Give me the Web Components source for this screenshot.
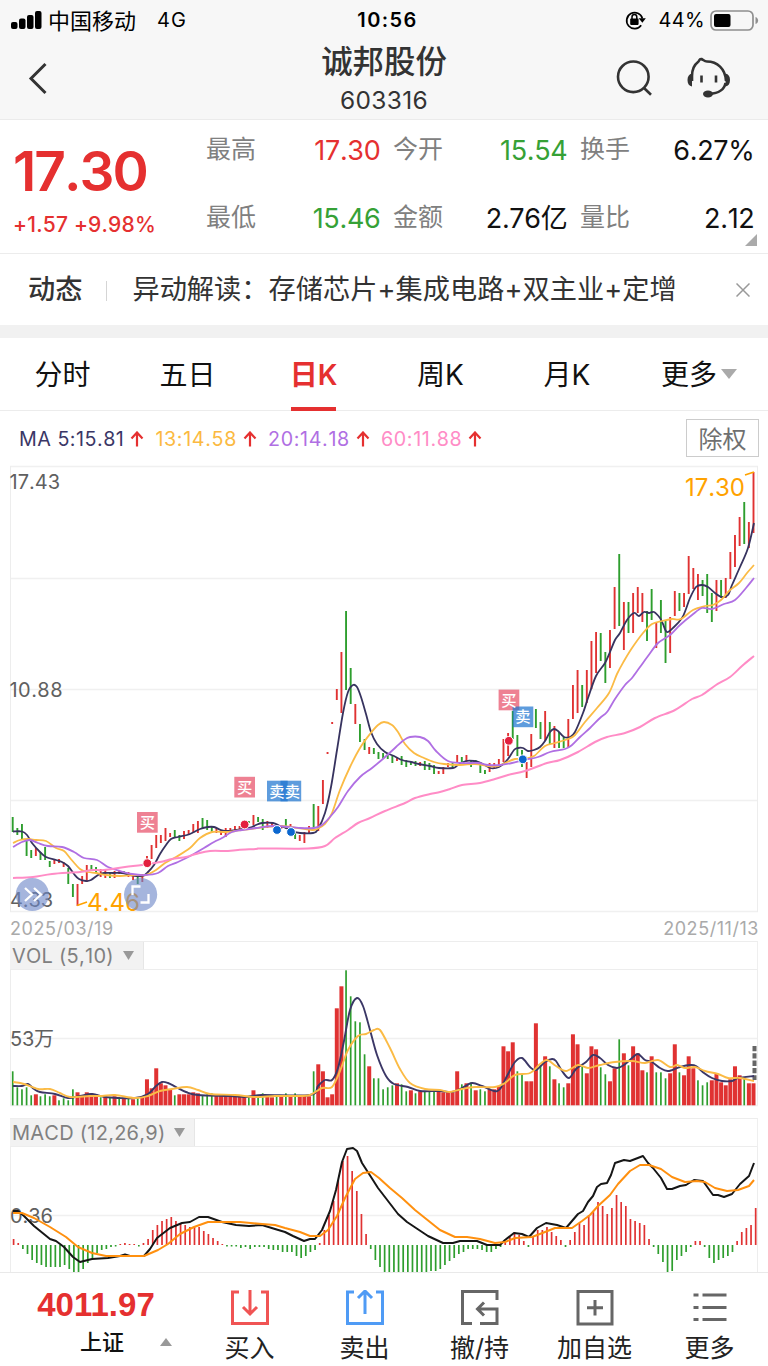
<!DOCTYPE html>
<html lang="zh-CN">
<head>
<meta charset="utf-8">
<title>诚邦股份 603316</title>
<style>
  html, body {
    margin: 0;
    padding: 0;
  }
  body {
    width: 768px;
    height: 1366px;
    overflow: hidden;
    background: #fff;
    color: #111;
    font-family: Inter, "Noto Sans CJK SC", sans-serif;
    font-kerning: none;
    --red: #e53030;
    --green: #36a136;
    --line: #ececec;
  }
</style>
</head>
<body>
<stock-page></stock-page>

<script>
const STEP = 4.63;
const FIRST_X = 12.7;
const RED = "#e03232";
const GREEN = "#2e9e2e";

// one entry per trading day: colour, top, bottom
const CANDLES = `g817-832 g828-835 g824-840 g840-856 g850-858 r848-856 g852-860 g847-860 g861-867 r859-864
r859-863 r862-867 g868-884 g884-897 r884-906 r876-884 r865-882 g865-871 g867-873 r869-877
r870-878 g872-878 r871-878 r870-874 g871-874 r872-877 r875-880 g877-884 r874-882 r856-862
r845-859 r835-848 r835-843 r828-841 r833-837 g830-837 g835-841 r831-839 r830-835 r824-833
r821-833 g818-828 g820-830 g826-833 r828-833 r830-835 r828-837 r828-833 r826-830 r826-830
r824-830 g821-823 r815-825 g817-822 g819-830 r821-828 r823-827 g825-830 r825-829 g819-829
r824-829 g832-839 r835-841 r832-843 r826-833 g804-828 r806-831 r780-804 r752-754 r722-724
r689-700 r652-713 g611-690 g668-704 r704-724 g724-742 g739-750 r747-754 g748-754 g752-759
g753-759 g753-759 g756-763 r757-761 g756-765 g760-767 g762-765 g761-766 r762-766 g761-770
g763-770 g765-774 r771-774 r767-774 r763-767 g763-767 r755-763 g757-762 r755-762 g760-767
g760-765 g765-773 g770-774 r763-772 r763-768 r759-766 r739-762 r733-756 g711-739 g735-756
g750-767 r762-778 r734-767 g709-728 g722-739 r711-741 g722-744 r726-748 g732-748 g737-748
r719-747 r685-719 r670-713 g685-707 r670-703 r641-689 r632-673 g633-661 g652-683 r630-668
r587-629 g554-626 r602-650 g602-633 r593-633 r587-613 r593-622 g611-641 g589-620 r622-648
g600-633 g621-663 r617-653 r591-616 g593-611 r593-607 r556-594 r568-589 r574-600 g580-596
g574-613 g593-622 r580-611 g580-598 r578-598 r552-579 r535-567 r517-546 g502-544 r522-548
r472-533`.split(/\s+/);

const VOLUMES = `g34 g18 g16 g18 g10 r11 g9 g11 g9 r10 g5 g7 g5 g16 r13 r9 r13 r12 r11 g8
r9 g8 r9 g8 r7 g7 r6 g7 r9 r26 r17 r37 r22 r20 r16 g10 r11 r11 r11 r13
r12 g10 g11 g12 r10 r10 r10 r10 r10 r9 r9 g8 r15 g10 g12 r9 r8 g10 r9 g12
r10 g12 r10 r10 r9 g34 r41 r34 r8 r11 r97 r119 g135 g109 g84 g83 g51 r39 g27 g27
g16 g18 g20 r22 g21 g14 r15 g12 r14 g14 g14 g14 r14 r13 r13 r13 r34 g21 r22 g23
r15 g16 g14 r16 r16 r19 r59 r54 r63 g34 g31 r24 r24 r82 g40 r49 g39 r26 g22 g18
r22 r71 r61 g39 r32 r59 r56 g38 g31 r24 r37 g66 r52 g40 r59 r52 r35 g33 r49 g33
g33 g27 r32 r61 g33 r30 r49 r37 g25 g20 g23 r25 r32 r23 r20 r26 r39 r30 g27 r22
r22`.split(/\s+/);

const MACD_BARS = [
  6, 2, -4, -9, -15, -18, -20, -22, -22, -22, -22, -20, -24, -27, -27, -24, -18, -13, -8, -5,
  -4, -2, -1.5, 1, 2, 1, 1, -1.5, 2, 6, 15, 20, 24, 26, 28, 24, 22, 20, 18, 18,
  18, 14, 11, 7, 4, 1, -1.5, -1.5, -1.5, -3, -2, -4, -2, -2, -2, -4, -5, -5, -7, -7,
  -7, -11, -13, -11, -7, -5, 2, 15, 30, 44, 65, 84, 89, 74, 54, 31, 11, -4, -15, -22,
  -27, -27, -27, -27, -27, -27, -27, -27, -27, -27, -26, -26, -24, -20, -16, -13, -9, -7, -4, -4,
  -4, -5, -7, -7, -4, -2, 3, 8, 13, 10, 4, -2, 9, 15, 15, 18, 13, 9, 5, -2,
  5, 13, 22, 20, 30, 33, 43, 39, 31, 37, 50, 43, 39, 26, 24, 22, 20, 6, -2, -9,
  -17, -27, -26, -15, -11, -7, -2, 4, 4, -2, -13, -18, -15, -13, -11, -7, 4, 13, 17, 20,
  37
];

const MA5 = "13,831.5 22,831.5 27,835 32,843 40,852 46,857 56,860 62,862 68,866 74,874 79,879 86,881 91,880 98,875 104,873 113,873 122,873 130,875 137,876 143,876 148,872 154,865 160,854 166,845 171,839 178,837 187,835 194,832 200,829 208,827 214,827 221,830 227,831 236,830 244,829 252,827 256,825 262,823 273,823 280,826 286,828 292,831 300,833 313,833 318,829 325,813 331,787 337,750 343,713 348,692 353,685 357,687 361,697 366,714 371,732 377,744 385,752 394,756 402,760 411,762 419,764 430,766 439,768 453,768 458,765 466,761 474,761 481,763 490,768 496,768 502,765 508,759 514,750 518,748 523,748 528,751 534,750 540,747 545,741 550,732 554,729 558,731 564,737 570,737 575,732 583,713 588,698 596,676 605,663 610,652 615,640 620,633 627,620 634,613 639,616 644,612 649,613 654,612 660,618 663,624 667,632 674,627 682,618 686,609 690,598 696,587 702,585 708,587 715,593 722,597 728,595 732,585 740,567 748,548 754,523";
const MA13 = "13,843 20,840 28,839 36,840 46,841 56,848 64,851 70,858 80,869 88,872 96,873 106,875 120,876 135,875 146,875 156,870 165,863 176,857 190,848 200,838 212,832 225,832 235,831 250,829 265,827 282,826 298,828 312,830 317,829 325,824 332,813 340,790 350,767 360,748 370,734 378,725 384,722 392,725 398,732 405,744 414,753 424,758 434,762 444,764 460,765 475,764 488,766 498,766 505,763 515,759 524,759 534,756 545,746 555,743 568,739 575,735 585,722 597,708 609,693 617,674 624,661 632,648 643,633 652,624 662,621 672,619 681,619 693,610 705,606 713,605 721,600 729,591 739,583 747,573 754,565";
const MA20 = "13,847 22,842 30,840 38,843 48,846 62,847 74,852 84,858 97,860 108,867 120,871 132,874 145,875 158,873 168,866 178,862 192,855 204,848 214,842 222,838 232,832 242,830 256,828 275,826 300,828 314,828 322,825 330,817 338,807 348,791 360,777 372,768 384,758 396,747 404,740 410,737 420,737 428,741 436,751 448,761 462,763 478,763 488,765 500,765 512,763 524,760 538,757 550,752 565,749 572,745 580,737 590,728 600,718 607,712 615,699 625,685 632,678 640,667 648,656 658,643 670,635 680,625 692,615 702,608 712,609 724,604 735,600 746,588 754,578";
const MA60 = "13,878 33,877 52,874 80,872 92,870 104,870 125,867 142,865 160,862 172,859 186,857 196,854 210,851 228,851 238,850 256,849 262,848.5 308,848.5 325,846 335,838 348,830 358,823 370,818 385,811 405,803 415,798 430,794 440,792 450,789 462,785 480,783 495,779 508,775 525,771 547,763 560,760 578,752 595,742 607,737 625,733 640,727 655,718 675,710 692,699 702,695 716,685 730,677 742,666 754,656";

const VOL5 = "13,1086 22,1086 28,1084 34,1089 40,1092 55,1094 68,1098 80,1096 92,1094 105,1097 118,1098 135,1098 148,1094 156,1086 162,1082 168,1083 176,1087 186,1092 198,1095 230,1096 245,1097 262,1095 310,1095 318,1086 325,1080 332,1080 338,1068 344,1041 350,1010 357,998 363,1006 370,1030 377,1055 386,1076 394,1084 408,1087 420,1091 440,1091 452,1092 462,1088 472,1083 482,1086 494,1091 500,1089 507,1076 515,1062 522,1058 530,1067 536,1070 545,1062 552,1059 556,1061 562,1071 569,1078 576,1069 586,1062 593,1055 600,1058 608,1065 617,1068 624,1065 632,1058 638,1054 645,1060 652,1062 660,1068 668,1071 680,1067 690,1065 696,1066 704,1073 712,1078 722,1081 732,1081 738,1078 754,1076";
const VOL10 = "13,1082 24,1084 38,1089 50,1089 60,1093 70,1097 90,1096 102,1096 115,1095 135,1098 148,1096 160,1091 172,1089 187,1087 198,1090 210,1094 235,1095 255,1097 275,1096 295,1096 310,1095 322,1088 332,1087 340,1071 348,1050 358,1036 366,1034 374,1030 380,1030 390,1048 400,1069 410,1083 425,1089 440,1090 450,1092 462,1089 475,1087 495,1087 505,1083 515,1075 530,1073 540,1064 547,1060 556,1066 566,1071 578,1065 588,1068 600,1065 615,1062 632,1061 645,1063 658,1060 670,1067 677,1065 685,1068 695,1067 705,1071 718,1074 728,1078 740,1078 754,1081";

const DIF = "13,1211 18,1211 24,1216 34,1226 50,1239 56,1241 64,1247 73,1257 80,1262 92,1259 108,1258 120,1256 125,1254.5 130,1256 144,1256 150,1249 157,1238 170,1228 182,1223 190,1222 199,1217 208,1217 222,1222 236,1225 249,1226 262,1225 275,1229 285,1232 293,1236 304,1241 310,1239 315,1239 322,1230 330,1211 336,1190 342,1162 347,1149 353,1148 357,1151 362,1163 371,1177 378,1188 388,1201 398,1214 407,1222 416,1228 428,1236 443,1243 453,1243 460,1241 477,1241 487,1245 500,1245 505,1240 514,1233 522,1234 529,1237 537,1228 546,1223 557,1225 566,1228 572,1221 578,1214 583,1211 588,1202 593,1196 597,1187 601,1184 607,1183 611,1175 615,1163 624,1160 630,1161 643,1156 648,1163 653,1168 661,1178 667,1189 672,1189 680,1186 686,1185 694,1180 703,1181 708,1188 713,1195 718,1195 724,1197 732,1194 740,1184 749,1176 754,1163";
const DEA = "13,1213 22,1213 34,1218 50,1227 66,1237 78,1247 92,1253 106,1256 144,1256 158,1250 168,1244 180,1234 194,1227 208,1222 240,1222 262,1224 275,1225 285,1228 300,1232 310,1236 320,1236 328,1230 337,1216 345,1198 355,1179 363,1173 371,1172 379,1178 390,1188 402,1198 415,1210 430,1222 440,1230 455,1237 467,1237 480,1239 495,1243 505,1242 515,1238 532,1237 545,1232 555,1228 572,1228 582,1221 590,1215 598,1206 610,1195 618,1184 630,1171 640,1165 649,1165 661,1169 672,1177 685,1182 697,1181 705,1182 715,1188 727,1191 738,1190 749,1186 754,1180";

function barX(i) {
  return (FIRST_X + STEP * i).toFixed(2);
}

// Catmull-Rom spline through the points
function curve(points, color, width = 1.8) {
  const p = points.split(" ").map((pair) => pair.split(",").map(Number));
  let d = `M${p[0]}`;
  for (let i = 0; i < p.length - 1; i++) {
    const a = p[i - 1] || p[i];
    const b = p[i];
    const c = p[i + 1];
    const e = p[i + 2] || c;
    d += `C${b[0] + (c[0] - a[0]) / 6},${b[1] + (c[1] - a[1]) / 6} ${c[0] - (e[0] - b[0]) / 6},${c[1] - (e[1] - b[1]) / 6} ${c}`;
  }
  return `<path d="${d}" fill="none" stroke="${color}" stroke-width="${width}"/>`;
}

function polyline(points, color) {
  return `<polyline points="${points}" fill="none" stroke="${color}" stroke-width="2" stroke-linejoin="round"/>`;
}

function gridLines(rows) {
  return rows.map((y) => `<path d="M10 ${y}H758" stroke="#f0f0f0" stroke-width="1.3"/>`).join("");
}

function define(name, html) {
  customElements.define(name, class extends HTMLElement {
    constructor() {
      super();
      this.attachShadow({ mode: "open" }).innerHTML = html;
    }
  });
}

define("status-bar", `
<style>
  :host { display: flex; height: 40px; align-items: center; background: #f7f7f7; color: #000; font-size: 20px; }
  .side { flex: 1; display: flex; align-items: center; box-sizing: border-box; }
  .left { padding-left: 11px; }
  .right { justify-content: flex-end; padding-right: 9px; }
  .carrier { margin: -3px 0 0 6px; font-size: 22px; }
  .net { margin-left: 21px; letter-spacing: 1px; }
  .time { font-weight: 600; letter-spacing: 1.4px; margin-left: 5px; }
  .pct { margin: 0 5px 0 13px; letter-spacing: 0.3px; }
  svg { display: block; }
</style>
<div class="side left">
  <svg width="31" height="18"><rect y="11" width="6.5" height="7" rx="2"/><rect x="8" y="7.5" width="6.5" height="10.5" rx="2"/><rect x="16" y="4" width="6.5" height="14" rx="2"/><rect x="24" width="6.5" height="18" rx="2"/></svg>
  <span class="carrier">中国移动</span><span class="net">4G</span>
</div>
<div class="time">10:56</div>
<div class="side right">
  <svg width="21" height="20" viewBox="0 0 21 20"><path d="M16.2 15.3A8 8 0 1 1 17.4 8.5" fill="none" stroke="#000" stroke-width="1.7"/><path d="M13.6 8.2h7.2l-3.4 4.6z"/><rect x="5.2" y="8.6" width="8.4" height="6.3" rx=".8"/><path d="M7 9V7a2.4 2.4 0 0 1 4.8 0v2" fill="none" stroke="#000" stroke-width="1.5"/></svg>
  <span class="pct">44%</span>
  <svg width="49" height="21"><rect x="1" y="1" width="42" height="19" rx="5" fill="none" stroke="#8f8f8f" stroke-width="1.7"/><rect x="4" y="4" width="16.5" height="13" rx="2"/><path d="M45.5 7v7c3.5-1 3.5-6 0-7z" fill="#8f8f8f"/></svg>
</div>`);

define("stock-header", `
<style>
  :host { display: flex; height: 79px; background: #f7f7f7; border-bottom: 1px solid #ebebeb; color: #333; }
  .left, .right { width: 192px; display: flex; box-sizing: border-box; }
  .left { padding: 22px 0 0 27px; }
  .right { padding-left: 40px; }
  .title { flex: 1; text-align: center; }
  .name { font-size: 31.4px; line-height: 38px; margin-top: 3px; font-weight: 500; }
  .code { font-size: 24.5px; line-height: 30px; margin-top: 4px; letter-spacing: 0.3px; }
</style>
<div class="left"><svg width="22" height="34" fill="none" stroke="#333" stroke-width="3"><path d="M18.5 2 4 16.5 18.5 31"/></svg></div>
<div class="title"><div class="name">诚邦股份</div><div class="code">603316</div></div>
<div class="right">
  <svg width="140" height="79" fill="none" stroke="#333" stroke-width="2.6">
    <circle cx="17.3" cy="36.8" r="15.3"/><path d="M27.5 47.5 35 54.7"/>
    <path d="M76 41v-5c0-5 2-11 6-14 1.5-1 1-3.5 3.5-3 2 1 3 2.5 5.5 2.5 10 0 18.5 7 19 19.5"/>
    <path d="M76 33.5V46.5c-3-.5-4.5-3-4.5-6.5s1.5-6 4.5-6.5zM109.5 33.5c3 .5 4.5 3 4.5 6.5s-1.5 6-4.5 6.5z" fill="#333" stroke="none"/>
    <path d="M109.5 43c-1 6-6.5 10.5-16 11"/><path d="M85.5 35.5v7M100 35.5v7"/>
    <ellipse cx="92" cy="54" rx="5" ry="3.4" fill="#333" stroke="none"/>
  </svg>
</div>`);

define("quote-item", `
<style>
  :host { display: flex; justify-content: space-between; color: #111; }
  .label { font-size: 25px; line-height: 30px; color: #808080; }
  .value { font-size: 27px; line-height: 31px; margin: 1px -1px 0 0; letter-spacing: -0.3px; white-space: nowrap; }
</style>
<span class="label"><slot name="label"></slot></span><span class="value"><slot></slot></span>`);

define("quote-panel", `
<style>
  :host { display: flex; height: 133px; border-bottom: 1px solid var(--line); position: relative; }
  .main { width: 206px; padding-left: 13px; box-sizing: border-box; color: var(--red); }
  .price { font-size: 55px; font-weight: 600; line-height: 60px; margin-top: 21px; letter-spacing: -2px; }
  .change { font-size: 21px; font-weight: 500; line-height: 26px; margin-top: 11px; letter-spacing: 0.2px; white-space: nowrap; }
  .grid { display: grid; grid-template-columns: repeat(3, 173.5px); column-gap: 13.5px; grid-auto-rows: 68px; margin-top: 14px; }
  .up { color: var(--red); }
  .down { color: var(--green); }
  .corner { position: absolute; right: 11px; bottom: 7px; }
</style>
<div class="main"><div class="price">17.30</div><div class="change">+1.57 +9.98%</div></div>
<div class="grid">
  <quote-item class="up"><span slot="label">最高</span>17.30</quote-item>
  <quote-item class="down"><span slot="label">今开</span>15.54</quote-item>
  <quote-item><span slot="label">换手</span>6.27%</quote-item>
  <quote-item class="down"><span slot="label">最低</span>15.46</quote-item>
  <quote-item><span slot="label">金额</span>2.76亿</quote-item>
  <quote-item><span slot="label">量比</span>2.12</quote-item>
</div>
<svg class="corner" width="12" height="12"><path d="M12 0v12H0z" fill="#aaa"/></svg>`);

define("news-bar", `
<style>
  :host { display: flex; align-items: center; height: 71px; border-bottom: 13px solid #f1f1f1; padding-left: 28px; color: #333; font-size: 27.2px; }
  b { font-weight: 500; margin-top: -5px; }
  i { width: 1px; height: 20px; margin: 2px 25px 0 24px; background: #d5d5d5; }
  .text { flex: 1; white-space: nowrap; margin-top: -5px; letter-spacing: 0.05px; }
  svg { margin: 0 18px 0 0; }
</style>
<b>动态</b><i></i><span class="text"><slot></slot></span>
<svg width="14" height="14"><path d="M.5.5l13 13M13.5.5l-13 13" stroke="#999" stroke-width="1.5"/></svg>`);

define("period-tabs", `
<style>
  :host { display: grid; grid-template-columns: 125px 125px 127px 127px 126px 138px; height: 72px; border-bottom: 1px solid var(--line); font-size: 28px; }
  div { display: flex; justify-content: center; align-items: center; padding-bottom: 3px; position: relative; color: #111; }
  .on { color: var(--red); font-weight: 600; }
  .on::after { content: ""; position: absolute; bottom: -1px; width: 45px; height: 4px; background: var(--red); }
  svg { margin: 3px 0 0 4px; }
</style>
<div>分时</div><div>五日</div><div class="on">日K</div><div>周K</div><div>月K</div>
<div>更多<svg width="16" height="10"><path d="M0 0h16l-8 10z" fill="#aaa"/></svg></div>`);

define("trend-value", `
<style>
  :host { display: flex; align-items: center; margin-right: 11px; padding-top: 2px; white-space: nowrap; }
  svg { margin-left: 6px; }
</style>
<slot></slot><svg width="14" height="16"><path d="M7 15.5V2M1.5 7.5 7 1.5l5.5 6" fill="none" stroke="#e53030" stroke-width="2.2"/></svg>`);

define("ma-legend", `
<style>
  :host { display: flex; align-items: center; height: 54px; padding: 0 9px 0 19px; font-size: 19.7px; letter-spacing: 0.65px; }
  .ma5 { color: #3b3766; letter-spacing: 0.5px; }
  .ma13 { color: #fbb941; }
  .ma20 { color: #b06fe3; }
  .ma60 { color: #ff8cc6; }
  button { margin: 0 0 0 auto; width: 73px; height: 38px; padding: 0 0 3px; border: 1.5px solid #ccc; background: #fff; color: #707070; font: 24px "Noto Sans CJK SC", sans-serif; }
</style>
<trend-value class="ma5">MA 5:15.81</trend-value>
<trend-value class="ma13">13:14.58</trend-value>
<trend-value class="ma20">20:14.18</trend-value>
<trend-value class="ma60">60:11.88</trend-value>
<button>除权</button>`);

class PriceChart extends HTMLElement {
  constructor() {
    super();
    this.attachShadow({ mode: "open" });
    this.render();
  }

  candles() {
    return CANDLES.map((c, i) => {
      const [top, bottom] = c.slice(1).split("-");
      return `<path d="M${barX(i)} ${top}V${bottom}" stroke="${c[0] === "r" ? RED : GREEN}" stroke-width="1.9"/>`;
    }).join("");
  }

  // all boxes go below all texts, two of them overlap
  flags(list) {
    const boxes = list.map(([x, y, text]) =>
      `<rect x="${x}" y="${y}" width="20.7" height="20.7" fill="${text === "买" ? "#e8506a" : "#2076d0"}" opacity=".72"/>`);
    const texts = list.map(([x, y, text, shift = 0]) =>
      `<text x="${x + 10.3 + shift}" y="${y + 15.9}" text-anchor="middle" font-size="15.3" font-weight="500" fill="#fff">${text}</text>`);
    return boxes.concat(texts).join("");
  }

  dot(x, y, color) {
    return `<circle cx="${x}" cy="${y}" r="4.4" fill="${color}" stroke="#fff" stroke-width="1"/>`;
  }

  render() {
    this.shadowRoot.innerHTML = `
    <style>
      :host { display: block; height: 476px; }
      svg { display: block; }
      .dates { display: flex; justify-content: space-between; padding: 0 9px 0 10px; font-size: 18px; line-height: 21px; color: #aaa; letter-spacing: 0.55px; }
    </style>
    <svg width="768" height="453" viewBox="0 465 768 453">
      ${gridLines([466.5, 578.5, 689.5, 800.5, 911.5])}
      <path d="M10.5 466V912M757.5 466V912" stroke="#ededed"/>
      <g font-size="20" fill="#606060">
        <text x="9.5" y="488.5" textLength="50.5">17.43</text>
        <text x="9.5" y="697" textLength="53">10.88</text>
        <text x="10" y="907" textLength="43">4.33</text>
      </g>
      ${this.candles()}
      ${curve(MA5, "#37335f")}
      ${curve(MA13, "#fbbb45")}
      ${curve(MA20, "#b06fe3")}
      ${curve(MA60, "#ff8cc6", 2)}
      <g fill="#ffa200" font-size="24">
        <text x="685" y="496" textLength="60">17.30</text>
        <text x="87" y="911" textLength="53">4.46</text>
        <path d="M745 475l9-3M77 905.5l10-3.5" stroke="#ffa200" stroke-width="1.6"/>
      </g>
      ${this.flags([
        [137, 812, "买"],
        [234.3, 776.8, "买"],
        [267, 780.7, "卖", -0.3],
        [280.5, 780.7, "卖", 1.6],
        [498.6, 689.6, "买"],
        [512.6, 706.5, "卖"]
      ])}
      ${this.dot(147.3, 863.2, "#e3203f")}
      ${this.dot(244.6, 824.5, "#e3203f")}
      ${this.dot(277, 830, "#0b67cf")}
      ${this.dot(291, 832, "#0b67cf")}
      ${this.dot(508.8, 740.8, "#e3203f")}
      ${this.dot(522.8, 759.3, "#0b67cf")}
      <g fill="#6d88c8" fill-opacity=".62">
        <circle cx="32.3" cy="894.5" r="16.6"/>
        <circle cx="140.6" cy="894.5" r="16.6"/>
      </g>
      <g fill="none" stroke="#fff" stroke-width="2.3">
        <path d="M25 888l7 6.5-7 6.5M34 888l7 6.5-7 6.5"/>
        <path d="M132.5 895v-8.5h8M148.5 894v8.5h-8"/>
      </g>
    </svg>
    <div class="dates"><span>2025/03/19</span><span>2025/11/13</span></div>`;
  }
}
customElements.define("price-chart", PriceChart);

define("indicator-title", `
<style>
  :host { display: flex; height: 27px; margin: 0 10px; border: solid #ededed; border-width: 1px 1px 1px 0; border-right-color: #efefef; }
  div { display: flex; align-items: center; padding: 0 9px 0 2px; background: #f2f2f2; border-right: 1px solid #e6e6e6; color: #808080; font-size: 20px; letter-spacing: 0.25px; }
  svg { margin-left: 9px; }
</style>
<div><slot></slot><svg width="11" height="9"><path d="M0 0h11L5.5 9z" fill="#999"/></svg></div>`);

class VolumeChart extends HTMLElement {
  constructor() {
    super();
    this.attachShadow({ mode: "open" });
    this.render();
  }

  bars() {
    return VOLUMES.map((v, i) => {
      const red = v[0] === "r";
      const h = Number(v.slice(1));
      const w = red ? 4 : 1.7;
      return `<rect x="${barX(i) - w / 2}" y="${1105.3 - h}" width="${w}" height="${h}" fill="${red ? RED : GREEN}"/>`;
    }).join("");
  }

  render() {
    this.shadowRoot.innerHTML = `
    <style>
      :host { display: block; height: 177px; }
      svg { display: block; }
    </style>
    <indicator-title>VOL (5,10)</indicator-title>
    <svg width="768" height="148" viewBox="0 970 768 148">
      ${gridLines([1038.5, 1105.5])}
      <path d="M10.5 970V1105M757.5 970V1105" stroke="#ededed"/>
      ${this.bars()}
      <text x="10" y="1046" font-size="20" textLength="44" fill="#606060">53万</text>
      <path d="M754.5 1046V1080" stroke="#666" stroke-width="4" stroke-dasharray="5.3 2"/>
      ${curve(VOL5, "#3b3766", 1.9)}
      ${curve(VOL10, "#fbbb45", 1.9)}
    </svg>`;
  }
}
customElements.define("volume-chart", VolumeChart);

class MacdChart extends HTMLElement {
  constructor() {
    super();
    this.attachShadow({ mode: "open" });
    this.render();
  }

  bars() {
    return MACD_BARS.map((h, i) => {
      const x = (13.6 + 4.638 * i).toFixed(2);
      return `<path d="M${x} 1245V${1245 - h}" stroke="${h > 0 ? RED : GREEN}" stroke-width="1.7"/>`;
    }).join("");
  }

  render() {
    this.shadowRoot.innerHTML = `
    <style>
      :host { display: block; height: 154px; overflow: hidden; }
      svg { display: block; }
    </style>
    <indicator-title>MACD (12,26,9)</indicator-title>
    <svg width="768" height="125" viewBox="0 1147 768 125">
      ${gridLines([1215.5])}
      <path d="M10.5 1147V1272M757.5 1147V1272" stroke="#ededed"/>
      <text x="10" y="1223" font-size="20" textLength="43" fill="#606060">0.36</text>
      ${this.bars()}
      ${polyline(DIF, "#161616")}
      ${polyline(DEA, "#ff900f")}
    </svg>`;
  }
}
customElements.define("macd-chart", MacdChart);

define("action-item", `
<style>
  :host { display: flex; flex-direction: column; align-items: center; padding-top: 17px; color: #222; }
  span { font-size: 25px; line-height: 34px; margin-top: 5px; white-space: nowrap; }
</style>
<slot name="icon"></slot><span><slot></slot></span>`);

define("bottom-bar", `
<style>
  :host { display: grid; grid-template-columns: 192px repeat(5, 115px); height: 93px; border-top: 1px solid #e9e9e9; background: #fff; }
  .index { display: flex; flex-direction: column; align-items: center; }
  .num { color: var(--red); font: 700 33px/36px "Liberation Sans", sans-serif; margin-top: 14px; }
  .name { display: flex; align-items: center; width: 192px; box-sizing: border-box; padding: 0 20px 0 80px; font-size: 22px; font-weight: 500; line-height: 34px; margin-top: 2px; }
  .name svg { margin-left: auto; }
  svg { display: block; fill: none; stroke-width: 3; }
</style>
<div class="index"><div class="num">4011.97</div><div class="name">上证<svg width="12" height="8"><path d="M0 8h12L6 0z" fill="#999"/></svg></div></div>
<action-item><svg slot="icon" width="40" height="36" stroke="#f05454"><path d="M9 2H2.5v31.5h35V2H31M20 0v24M13 17l7 7 7-7"/></svg>买入</action-item>
<action-item><svg slot="icon" width="40" height="36" stroke="#4f9bf5"><path d="M9 2H2.5v31.5h35V2H31M20 24V1M13 8l7-7 7 7"/></svg>卖出</action-item>
<action-item><svg slot="icon" width="40" height="36" stroke="#666"><path d="M37 10V1.5H2.5v32h9.5M20 33.5h17V19H18M24 12.5 17.5 19l6.5 6.5"/></svg>撤/持</action-item>
<action-item><svg slot="icon" width="40" height="36" stroke="#666"><path d="M3 1.5h34v32.5H3zM20 10v15.5M12 17.7h16"/></svg>加自选</action-item>
<action-item><svg slot="icon" width="36" height="36" stroke="#666"><path d="M1.5 5h5M10.5 5h24M1.5 17.5h5M10.5 17.5h24M1.5 29.5h5M10.5 29.5h24"/></svg>更多</action-item>`);

define("stock-page", `
<style>
  :host { display: flex; flex-direction: column; width: 768px; height: 1366px; }
</style>
<status-bar></status-bar>
<stock-header></stock-header>
<quote-panel></quote-panel>
<news-bar>异动解读：存储芯片+集成电路+双主业+定增</news-bar>
<period-tabs></period-tabs>
<ma-legend></ma-legend>
<price-chart></price-chart>
<volume-chart></volume-chart>
<macd-chart></macd-chart>
<bottom-bar></bottom-bar>`);
</script>
</body>
</html>
